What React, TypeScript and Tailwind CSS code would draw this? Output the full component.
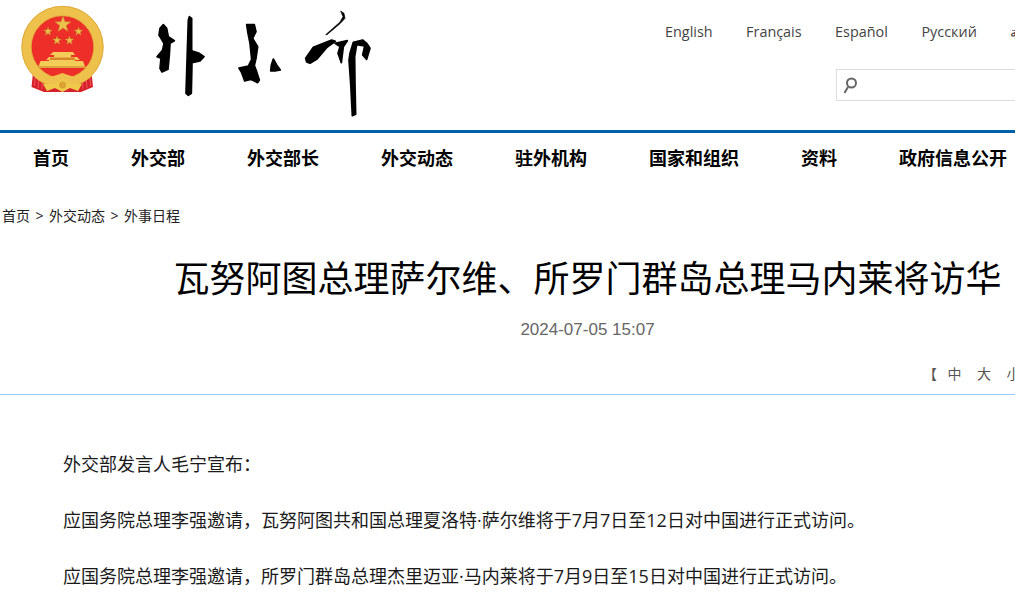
const navItems = ["首页", "外交部", "外交部长", "外交动态", "驻外机构", "国家和组织", "资料", "政府信息公开"];
const langs = ["English", "Français", "Español", "Русский", "العربية"];
const crumbs = ["首页", ">", "外交动态", ">", "外事日程"];
const cjk = "font-['Open_Sans','Noto_Sans_CJK_SC',sans-serif]";

function Star({ cx, cy, r }: { cx: number; cy: number; r: number }) {
  const pts = [];
  for (let i = 0; i < 10; i++) {
    const rad = i % 2 === 0 ? r : r * 0.4;
    const a = -Math.PI / 2 + (i * Math.PI) / 5;
    pts.push(`${(cx + rad * Math.cos(a)).toFixed(2)},${(cy + rad * Math.sin(a)).toFixed(2)}`);
  }
  return <polygon points={pts.join(" ")} fill="#ecc04a" stroke="#b98a2a" strokeWidth="0.4" />;
}

function Emblem() {
  return (
    <svg width="115" height="105" viewBox="0 0 115 105" className="shrink-0">
      {/* red ribbons behind the ring */}
      <path d="M33.500 68 L31.500 87 L44 92 L81 92 L93 87 L91 68 Z" fill="#d8202a" />
      <path d="M35.500 72 L34.500 86 M39 76 L38 88 M42.500 78 L42 89 M82.500 78 L83 89 M86 76 L87 88 M89.500 72 L90.500 86" stroke="#ef5a5e" strokeWidth="0.9" />
      {/* ring and red field */}
      <circle cx="62.500" cy="47" r="36" fill="#ee2e28" stroke="#eec04c" strokeWidth="10" />
      <circle cx="62.500" cy="47" r="40.700" fill="none" stroke="#d9a233" strokeWidth="0.8" />
      <circle cx="62.500" cy="47" r="31.300" fill="none" stroke="#d9a233" strokeWidth="0.6" />
      <Star cx={63} cy={24.500} r={8.500} />
      <Star cx={48} cy={31.500} r={4.500} />
      <Star cx={78.500} cy={31.500} r={4.500} />
      <Star cx={57} cy={40.500} r={4.500} />
      <Star cx={69.500} cy={40.500} r={4.500} />
      {/* gate tower */}
      <path d="M53 52 H73 L75 55 H71 V57 H77 L80 60 H75 V61 H83 L85.500 68 H38 L40.500 61 H49 V60 H46 L49 57 H54 V55 H50 Z" fill="#f3cd57" />
      <path d="M50 57.500 H75 V60 H50 Z" fill="#d9862f" />
      <path d="M38 66 H85.500 V68 H38 Z" fill="#dca43a" />
      {/* gold cloth under the ring */}
      <path d="M33 70 C42 81 52 77 62.500 73 C73 77 82 81 92 70 L93 75 C82 86 71 83 62.500 80 C52 83 42 86 33 75 Z" fill="#eec04c" />
      <path d="M43 84 L54 84 L62.500 79 L71 84 L82 84 L78 91 L70 88 L62.500 92 L55 88 L47 91 Z" fill="#f0c94a" />
      <circle cx="62.500" cy="85" r="3.500" fill="#d9a233" />
    </svg>
  );
}

function Calligraphy() {
  return (
    <svg width="240" height="125" viewBox="0 0 720 375" fill="#000" stroke="#000" strokeWidth="5" strokeLinejoin="round" className="shrink-0">
      <path d="M70 74 L80 85 L85 110 L103 122 L90 130 L88 165 L84 208 L66 216 L60 205 L63 175 L51 170 L68 150 L72 130 L57 105 L60 85 Z" />
      <path d="M148 50 L155 55 L155 152 L178 160 L192 170 L180 183 L156 188 L154 280 L145 286 L138 280 L142 150 L145 60 Z" />
      <path d="M320 74 L343 74 L348 95 L338 115 L353 140 L348 175 L343 197 L350 215 L358 240 L353 248 L332 238 L314 243 L305 218 L297 204 L325 198 L335 178 L330 130 L324 100 Z" />
      <path d="M400 177 L410 195 L421 210 L405 213 L392 213 L394 195 Z" />
      <path d="M497 175 L520 142 L575 120 L586 124 L560 143 L530 178 L510 190 L500 186 Z" />
      <path d="M557 104 L600 66 L609 50 L602 33 L612 40 L615 55 L600 71 L561 104 Z" strokeWidth="2" />
      <path d="M585 130 L622 122 L610 140 L604 188 L594 160 L600 140 Z" />
      <path d="M630 160 L640 127 L668 120 L680 130 L690 145 L680 178 L668 165 L674 138 L650 134 L644 170 L645 250 L647 343 L637 347 L632 250 L627 180 Z" />
    </svg>
  );
}

export default function App() {
  return (
    <div className={`h-[606px] w-full overflow-hidden bg-white text-black ${cjk}`}>
      <div className="w-[1175px]">
        <header className="flex h-[130px]">
          <Emblem />
          <div className="ml-[25px]">
            <Calligraphy />
          </div>
          <div className="ml-[285px] pt-[22px]">
            <ul className="flex gap-[33.500px] text-[14.400px] leading-[20px] text-[#444]">
              {langs.map((l) => (
                <li key={l}>{l}</li>
              ))}
            </ul>
            <div className="ml-[171px] mt-[27px] flex h-[32px] w-[300px] items-center border border-[#ddd] pl-[5px]">
              <svg width="18" height="20" viewBox="0 0 18 20" fill="none" stroke="#666">
                <circle cx="9.500" cy="8" r="4.500" strokeWidth="2" />
                <path d="M6 12 L2.500 18" strokeWidth="2" />
              </svg>
            </div>
          </div>
        </header>
        <nav className="border-t-[3px] border-[#0060a8]">
          <ul className="flex h-[50px] items-center gap-[62px] pl-[33px] text-[18px] font-bold leading-[50px] text-black">
            {navItems.map((n) => (
              <li key={n} className="shrink-0">{n}</li>
            ))}
          </ul>
        </nav>
        <div className="mt-[23px] flex gap-[5.500px] pl-[2px] text-[14px] leading-[20px] text-[#222]">
          {crumbs.map((c, i) => (
            <span key={i}>{c}</span>
          ))}
        </div>
        <h1 className="mt-[28px] text-center text-[36px] font-normal leading-[50px] text-black">
          瓦努阿图总理萨尔维、所罗门群岛总理马内莱将访华
        </h1>
        <p className="mt-[14px] text-center font-['Liberation_Sans',sans-serif] text-[17px] leading-[24px] text-[#666]">2024-07-05 15:07</p>
        <div className="mt-[22px] h-[31px] border-b border-[#99ccff] pl-[923px] text-[14px] leading-[20px] text-[#555]">
          <span className="flex gap-[15.500px]">
            <span className="mr-[-5px]">【</span>
            <span>中</span>
            <span>大</span>
            <span>小</span>
          </span>
        </div>
        <article className="mt-[53px] pl-[63px] text-[18px] leading-[32px] text-[#1a1a1a]">
          <p className="mb-[24px]">外交部发言人毛宁宣布：</p>
          <p className="mb-[24px]">应国务院总理李强邀请，瓦努阿图共和国总理夏洛特·萨尔维将于7月7日至12日对中国进行正式访问。</p>
          <p className="mb-[24px]">应国务院总理李强邀请，所罗门群岛总理杰里迈亚·马内莱将于7月9日至15日对中国进行正式访问。</p>
        </article>
      </div>
    </div>
  );
}
